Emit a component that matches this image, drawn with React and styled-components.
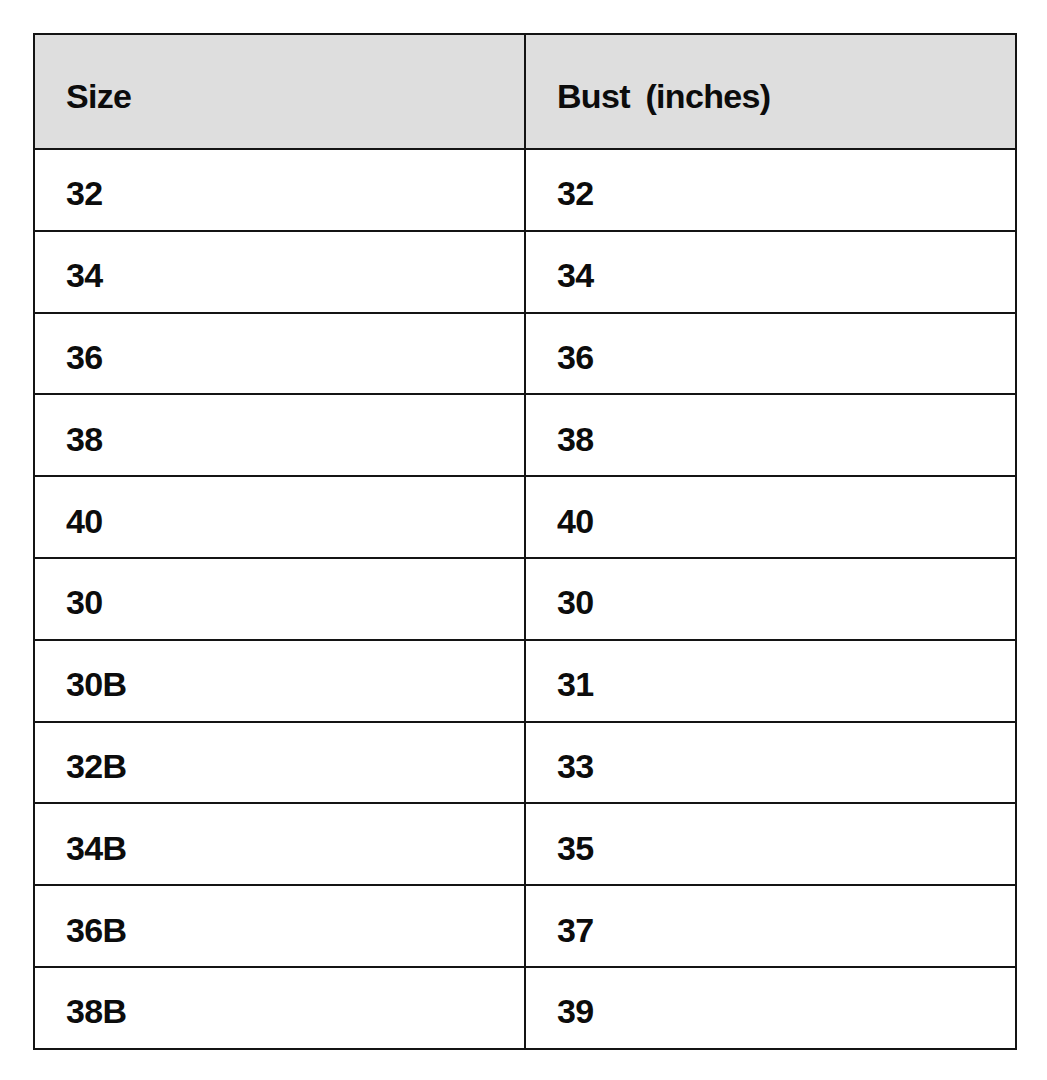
import React from "react";
import styled, { createGlobalStyle } from "styled-components";

const GlobalStyle = createGlobalStyle`
    html, body {
        margin: 0;
        padding: 0;
        background: #ffffff;
    }
`

let Page = styled.div`
    padding: 33px 30px 0 33px;
    font-family: "Liberation Sans", Arial, sans-serif;
`

let SizeTable = styled.table`
    width: 984px;
    border-collapse: collapse;
    table-layout: fixed;
    border: 2px solid #141414;
    th, td {
        border: 2px solid #141414;
        text-align: left;
        font-weight: bold;
        font-size: 34px;
        letter-spacing: -0.7px;
        word-spacing: 7px;
        color: #0c0c0c;
        padding: 8px 0 0 31px;
        vertical-align: middle;
    }
    th {
        background-color: #dedede;
        height: 103px;
        padding-top: 10px;
    }
    td {
        height: 71.8px;
    }
`

const rows = [
    ["32", "32"],
    ["34", "34"],
    ["36", "36"],
    ["38", "38"],
    ["40", "40"],
    ["30", "30"],
    ["30B", "31"],
    ["32B", "33"],
    ["34B", "35"],
    ["36B", "37"],
    ["38B", "39"],
]

export default function App(){
    return(
        <Page>
            <GlobalStyle />
            <SizeTable>
                <thead>
                    <tr>
                        <th>Size</th>
                        <th>Bust (inches)</th>
                    </tr>
                </thead>
                <tbody>
                    {rows.map((row,i)=>(
                        <tr key={i}>
                            <td>{row[0]}</td>
                            <td>{row[1]}</td>
                        </tr>
                    ))}
                </tbody>
            </SizeTable>
        </Page>
    )
}
